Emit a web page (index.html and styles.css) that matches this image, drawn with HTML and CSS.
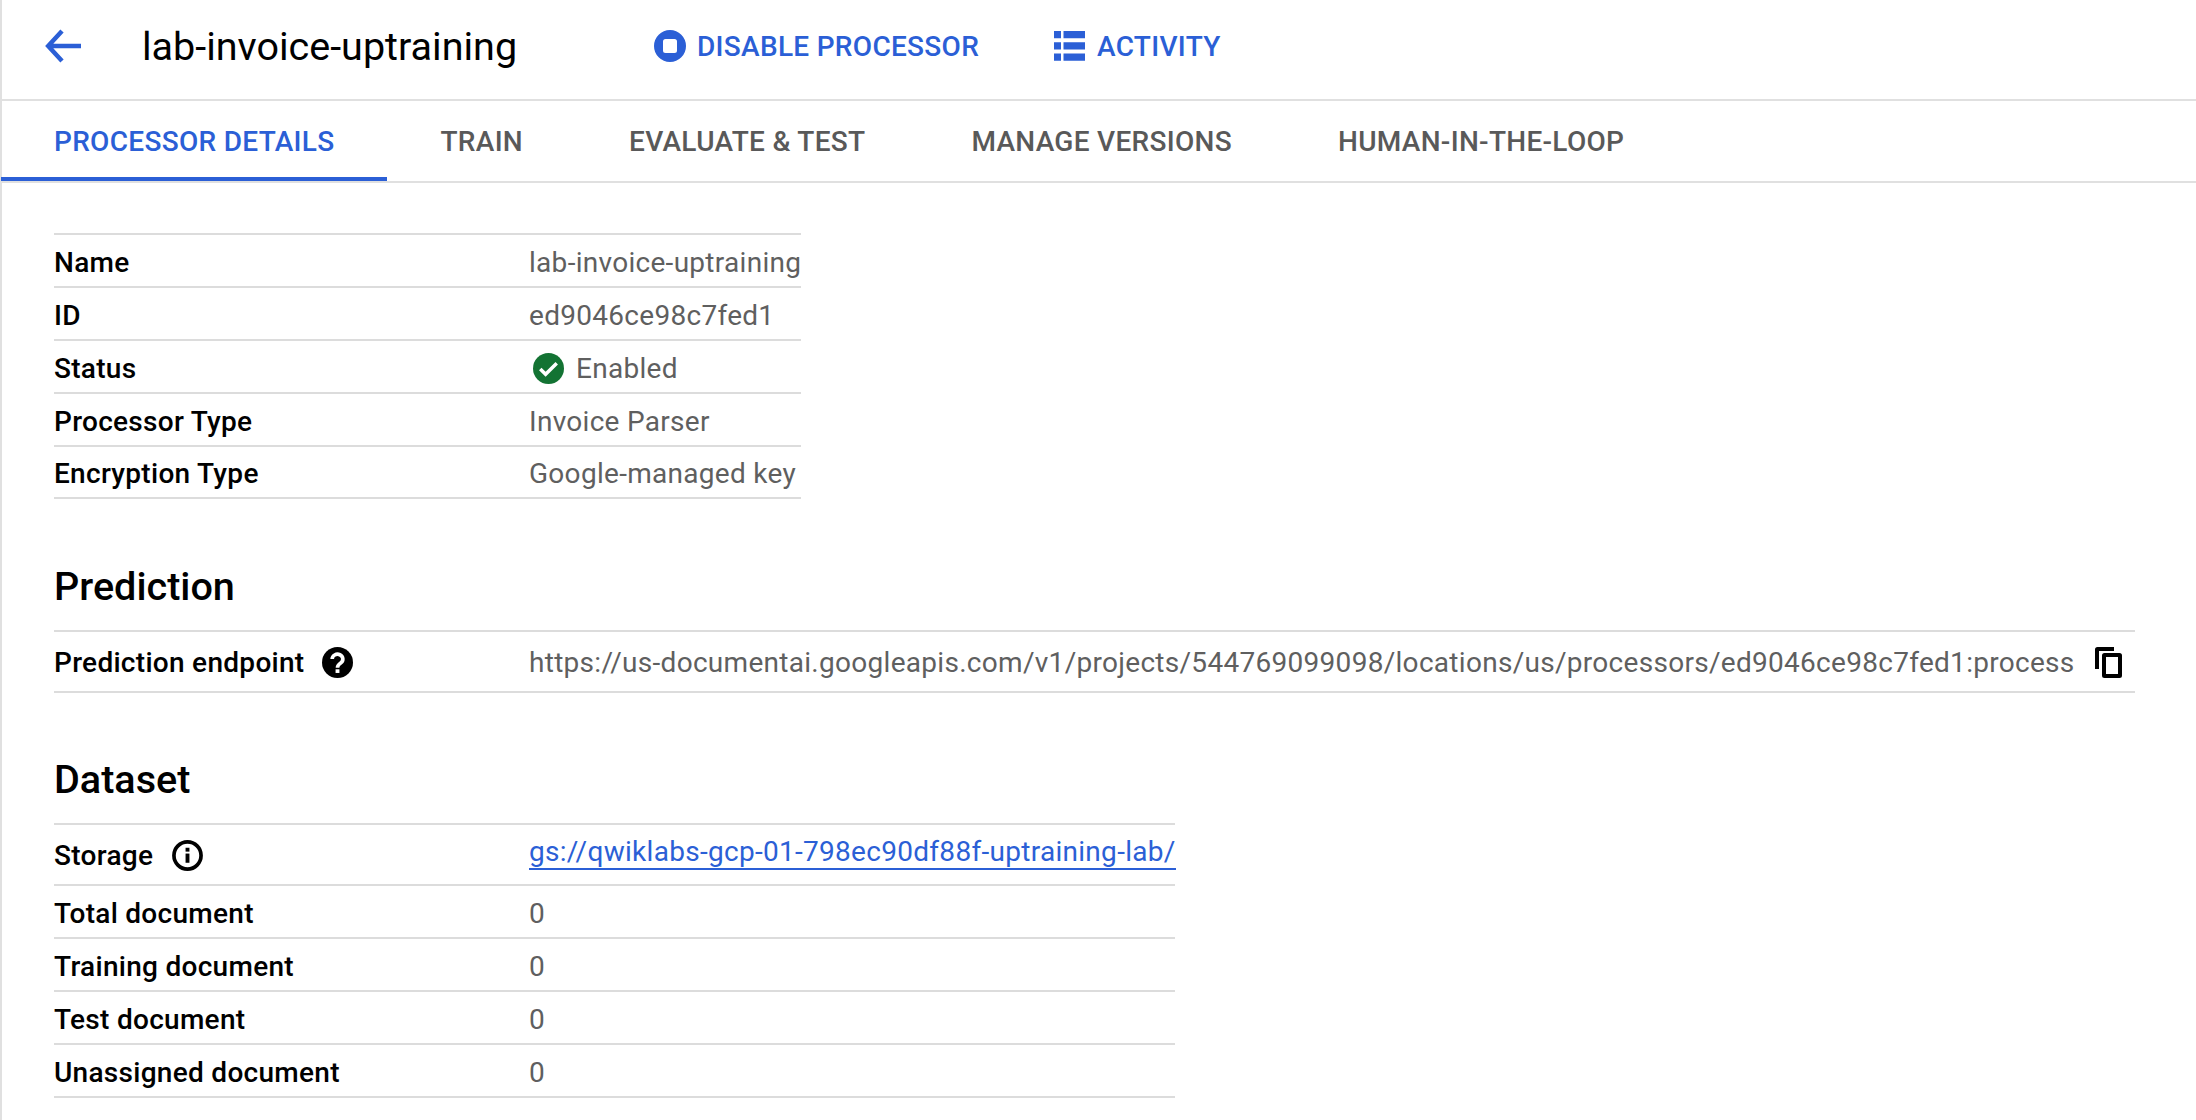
FILE: index.html
```html
<!DOCTYPE html>
<html lang="en">
<head>
<meta charset="utf-8">
<title>lab-invoice-uptraining</title>
<link rel="stylesheet" href="styles.css">
</head>
<body>
<div class="page">
  <header class="topbar">
    <svg class="back" viewBox="0 0 36 34"><path d="M17 2 3.200 17l13.800 15M3.500 17h32.500" fill="none" stroke="#2b5fd6" stroke-width="4.500"/></svg>
    <h1 class="title">lab-invoice-uptraining</h1>
    <a class="action action-disable">
      <svg class="ico-stop" viewBox="0 0 32 32"><path fill-rule="evenodd" fill="#2b5fd6" d="M16 0a16 16 0 1 0 0 32a16 16 0 1 0 0-32zM11.500 9h9a2.500 2.500 0 0 1 2.500 2.500v9a2.500 2.500 0 0 1-2.500 2.500h-9a2.500 2.500 0 0 1-2.500-2.500v-9a2.500 2.500 0 0 1 2.500-2.500z"/></svg>
      DISABLE PROCESSOR
    </a>
    <a class="action action-activity">
      <svg class="ico-list" viewBox="0 0 31 30"><path fill="#2b5fd6" d="M0 0h7v7.300H0zM0 11.200h7v7.300H0zM0 22.400h7v7.300H0zM9.500 0H31v7.300H9.500zM9.500 11.200H31v7.300H9.500zM9.500 22.400H31v7.300H9.500z"/></svg>
      ACTIVITY
    </a>
  </header>
  <nav class="tabs">
    <a class="tab active">PROCESSOR DETAILS</a>
    <a class="tab">TRAIN</a>
    <a class="tab">EVALUATE &amp; TEST</a>
    <a class="tab">MANAGE VERSIONS</a>
    <a class="tab">HUMAN-IN-THE-LOOP</a>
  </nav>
  <main class="content">
    <section class="kv kv-details">
      <div class="row"><div class="key">Name</div><div class="val">lab-invoice-uptraining</div></div>
      <div class="row"><div class="key">ID</div><div class="val">ed9046ce98c7fed1</div></div>
      <div class="row"><div class="key">Status</div><div class="val status">
        <svg class="ico-check" viewBox="0 0 32 32"><circle cx="16" cy="16" r="16" fill="#137333"/><path d="M7.500 16.500l5.500 5.500L24.500 10.500" fill="none" stroke="#fff" stroke-width="3.600"/></svg>
        Enabled</div></div>
      <div class="row"><div class="key">Processor Type</div><div class="val">Invoice Parser</div></div>
      <div class="row"><div class="key">Encryption Type</div><div class="val">Google-managed key</div></div>
    </section>
    <h2 class="heading heading-prediction">Prediction</h2>
    <section class="kv kv-wide">
      <div class="row row-tall"><div class="key">Prediction endpoint
        <svg class="ico-help" viewBox="0 0 32 32"><circle cx="16" cy="16" r="16" fill="#000"/><path d="M10.500 12.500a5.500 5 0 1 1 8.800 4c-2.300 1.600-3.300 2.500-3.300 4.800" fill="none" stroke="#fff" stroke-width="3.800"/><rect x="14" y="23" width="4" height="3.800" fill="#fff"/></svg>
      </div><div class="val val-url">https://us-documentai.googleapis.com/v1/projects/544769099098/locations/us/processors/ed9046ce98c7fed1:process
        <svg class="ico-copy" viewBox="0 0 27 31"><path fill-rule="evenodd" d="M2.500 0H19v4H4v18H0V2.500A2.500 2.500 0 0 1 2.500 0zM9.500 6h15A2.500 2.500 0 0 1 27 8.500v20a2.500 2.500 0 0 1-2.500 2.500h-15A2.500 2.500 0 0 1 7 28.500v-20A2.500 2.500 0 0 1 9.500 6zM11 10v17h12V10z"/></svg>
      </div></div>
    </section>
    <h2 class="heading heading-dataset">Dataset</h2>
    <section class="kv kv-dataset">
      <div class="row row-tall"><div class="key">Storage
        <svg class="ico-info" viewBox="0 0 32 32"><circle cx="16" cy="16" r="14" fill="none" stroke="#000" stroke-width="3.800"/><rect x="14" y="14" width="4" height="9.500"/><rect x="14" y="8" width="4" height="4"/></svg>
      </div><div class="val"><a class="link">gs://qwiklabs-gcp-01-798ec90df88f-uptraining-lab/</a></div></div>
      <div class="row"><div class="key">Total document</div><div class="val">0</div></div>
      <div class="row"><div class="key">Training document</div><div class="val">0</div></div>
      <div class="row"><div class="key">Test document</div><div class="val">0</div></div>
      <div class="row"><div class="key">Unassigned document</div><div class="val">0</div></div>
    </section>
  </main>
</div>
</body>
</html>
```
FILE: styles.css
```css
* { box-sizing: border-box; }
html, body { margin: 0; padding: 0; background: #fff; }
body { font-family: Roboto, "Liberation Sans", sans-serif; color: #000; overflow: hidden; }
.page { width: 2196px; height: 1120px; border-left: 2px solid #e0e0e0; }

.topbar { height: 101px; border-bottom: 2px solid #e0e0e0; display: flex; align-items: center; padding: 0 0 7px 43px; }
.back { width: 36px; height: 34px; }
.title { margin: 0 0 0 61px; width: 512px; font-size: 39.500px; font-weight: 400; white-space: nowrap; }
.action { display: flex; align-items: center; color: #2b5fd6; font-size: 28px; letter-spacing: .3px; font-weight: 500; white-space: nowrap; }
.ico-stop { width: 32px; height: 32px; margin-right: 11px; }
.ico-list { width: 31px; height: 30px; margin-right: 12px; }
.action-disable { width: 400px; }

.tabs { height: 82px; border-bottom: 2px solid #e0e0e0; display: flex; margin-left: -1px; }
.tab { height: 80px; padding: 0 53px; display: flex; align-items: center; color: #595959; font-size: 28px; letter-spacing: .3px; font-weight: 500; white-space: nowrap; }
.tab.active { color: #2b5fd6; border-bottom: 4px solid #2b5fd6; padding-top: 4px; }

.content { padding: 50px 61px 0 52px; }
.kv { border-top: 2px solid #dcdcdc; }
.kv-details { width: 747px; }
.kv-details .row:last-child { height: 52px; }
.kv-dataset { width: 1121px; }
.row { height: 53px; padding-top: 3px; border-bottom: 2px solid #dcdcdc; display: flex; align-items: center; font-size: 28px; letter-spacing: .29px; }
.row-tall { height: 61px; padding-top: 2px; }
.key { width: 475px; flex: none; font-weight: 500; display: flex; align-items: center; white-space: nowrap; }
.val { color: #5f5f5f; white-space: nowrap; display: flex; align-items: center; }
.heading { margin: 0; font-size: 39.600px; font-weight: 500; }
.heading-prediction { padding-top: 64px; height: 131px; }
.heading-dataset { padding-top: 63px; height: 130px; }
.ico-check { width: 31px; height: 31px; margin: 0 12px 0 4px; }
.ico-help { width: 31px; height: 31px; margin-left: 18px; }
.ico-info { width: 31px; height: 31px; margin-left: 19px; }
.ico-copy { width: 27px; height: 31px; margin-left: 20px; }
.link { color: #2b5fd6; border-bottom: 2px solid #2b5fd6; margin-bottom: 7px; }
```
